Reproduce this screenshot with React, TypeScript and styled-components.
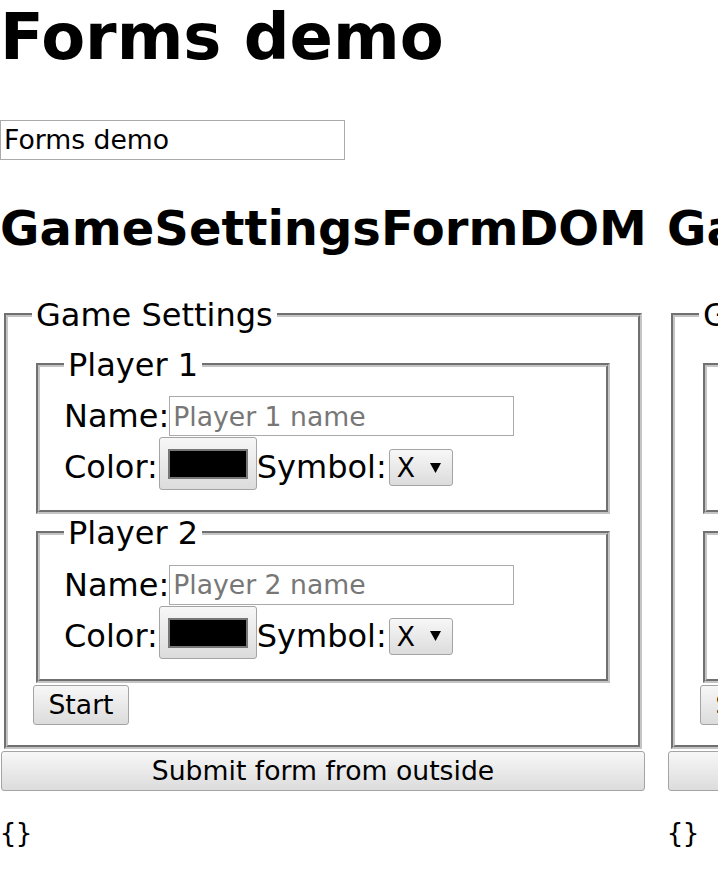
import styled, { createGlobalStyle } from "styled-components"

const GlobalStyle = createGlobalStyle`
  html, body {
    margin: 0;
    padding: 0;
    overflow: hidden;
    background: #fff;
    color: #000;
    font-family: "DejaVu Sans", "Liberation Sans", sans-serif;
  }
`

const Page = styled.main`
  width: 100%;
`

const Title = styled.h1`
  margin: 0 0 45.5px;
  font-size: 64px;
  font-weight: bold;
  line-height: normal;
`

const TextInput = styled.input`
  box-sizing: border-box;
  display: block;
  width: 345px;
  height: 40px;
  margin: 0;
  padding: 0 3px;
  border: 1px solid #aaaaaa;
  border-radius: 0;
  background: #fff;
  font-family: inherit;
  font-size: 26.67px;
  color: #000;
  outline: none;

  &::placeholder {
    color: #777;
    opacity: 1;
  }
`

const Columns = styled.div`
  display: flex;
  flex-wrap: nowrap;
  gap: 21px;
`

const Column = styled.section`
  flex: 0 0 646px;
  width: 646px;
`

const ColumnTitle = styled.h2`
  margin: 40.5px 0 40px;
  font-size: 48px;
  font-weight: bold;
  line-height: normal;
  white-space: nowrap;
`

const Form = styled.form`
  margin: 0;
`

const Fieldset = styled.fieldset`
  margin: 0 4px;
  padding: 11.6px 24px 20px;
  border: 4px groove #c4c4c4;
  min-width: 0;
`

const Legend = styled.legend`
  padding: 0 4px;
  font-size: 32px;
  line-height: normal;
`

const Row = styled.div`
  display: flex;
  align-items: ${(p) => (p.$bottom ? "flex-end" : "center")};
  height: ${(p) => (p.$bottom ? "auto" : "42px")};
  font-size: 32px;
  line-height: normal;
`

const Label = styled.span`
  white-space: nowrap;
  margin-bottom: ${(p) => (p.$lift ? "4px" : "0")};
`

const GradientButton = styled.button`
  box-sizing: border-box;
  margin: 0;
  border: 1px solid #a4a4a4;
  border-radius: 3px;
  background: linear-gradient(#f7f7f7, #dcdcdc);
  font-family: inherit;
  font-size: 26.67px;
  color: #000;
  line-height: normal;
  cursor: pointer;
`

const ColorButton = styled(GradientButton)`
  display: flex;
  align-items: center;
  justify-content: center;
  width: 98px;
  height: 53px;
  margin-left: 1px;
  padding: 1px 0 0;
`

const Swatch = styled.span`
  box-sizing: border-box;
  width: 80px;
  height: 30px;
  border: 2px solid #777;
  background: ${(p) => p.color};
`

const SelectBox = styled(GradientButton)`
  display: flex;
  align-items: center;
  justify-content: space-between;
  width: 64px;
  height: 37px;
  padding: 0 11px 0 7px;
  margin: 0 0 4px 2px;
`

const StartButton = styled(GradientButton)`
  display: block;
  width: 96px;
  height: 40px;
  margin: 2px 0 0 1px;
  padding: 0;
`

const SubmitButton = styled(GradientButton)`
  display: block;
  width: 644px;
  height: 40px;
  margin: 2px 0 0 1px;
  padding: 0;
`

const Output = styled.pre`
  margin: 26.67px 0;
  font-family: "DejaVu Sans Mono", "Liberation Mono", monospace;
  font-size: 26.67px;
  line-height: normal;
`

function Arrow() {
  return (
    <svg width="11" height="10" viewBox="0 0 11 10">
      <polygon points="0,0 11,0 5.5,10" fill="#000" />
    </svg>
  )
}

function PlayerFields({ n }: { n: number }) {
  return (
    <Fieldset>
      <Legend>Player {n}</Legend>
      <Row>
        <Label>Name:</Label>
        <TextInput placeholder={`Player ${n} name`} />
      </Row>
      <Row $bottom>
        <Label $lift>Color:</Label>
        <ColorButton type="button">
          <Swatch color="#000000" />
        </ColorButton>
        <Label $lift>Symbol:</Label>
        <SelectBox type="button">
          <span>X</span>
          <Arrow />
        </SelectBox>
      </Row>
    </Fieldset>
  )
}

function GameSettings({ title }: { title: string }) {
  return (
    <Column>
      <ColumnTitle>{title}</ColumnTitle>
      <Form onSubmit={(e) => e.preventDefault()}>
        <Fieldset>
          <Legend>Game Settings</Legend>
          <PlayerFields n={1} />
          <PlayerFields n={2} />
          <StartButton type="submit">Start</StartButton>
        </Fieldset>
      </Form>
      <SubmitButton type="button">Submit form from outside</SubmitButton>
      <Output>{"{}"}</Output>
    </Column>
  )
}

export default function App() {
  return (
    <Page>
      <GlobalStyle />
      <Title>Forms demo</Title>
      <TextInput defaultValue="Forms demo" />
      <Columns>
        <GameSettings title="GameSettingsFormDOM" />
        <GameSettings title="GameSettingsFormReact" />
      </Columns>
    </Page>
  )
}
